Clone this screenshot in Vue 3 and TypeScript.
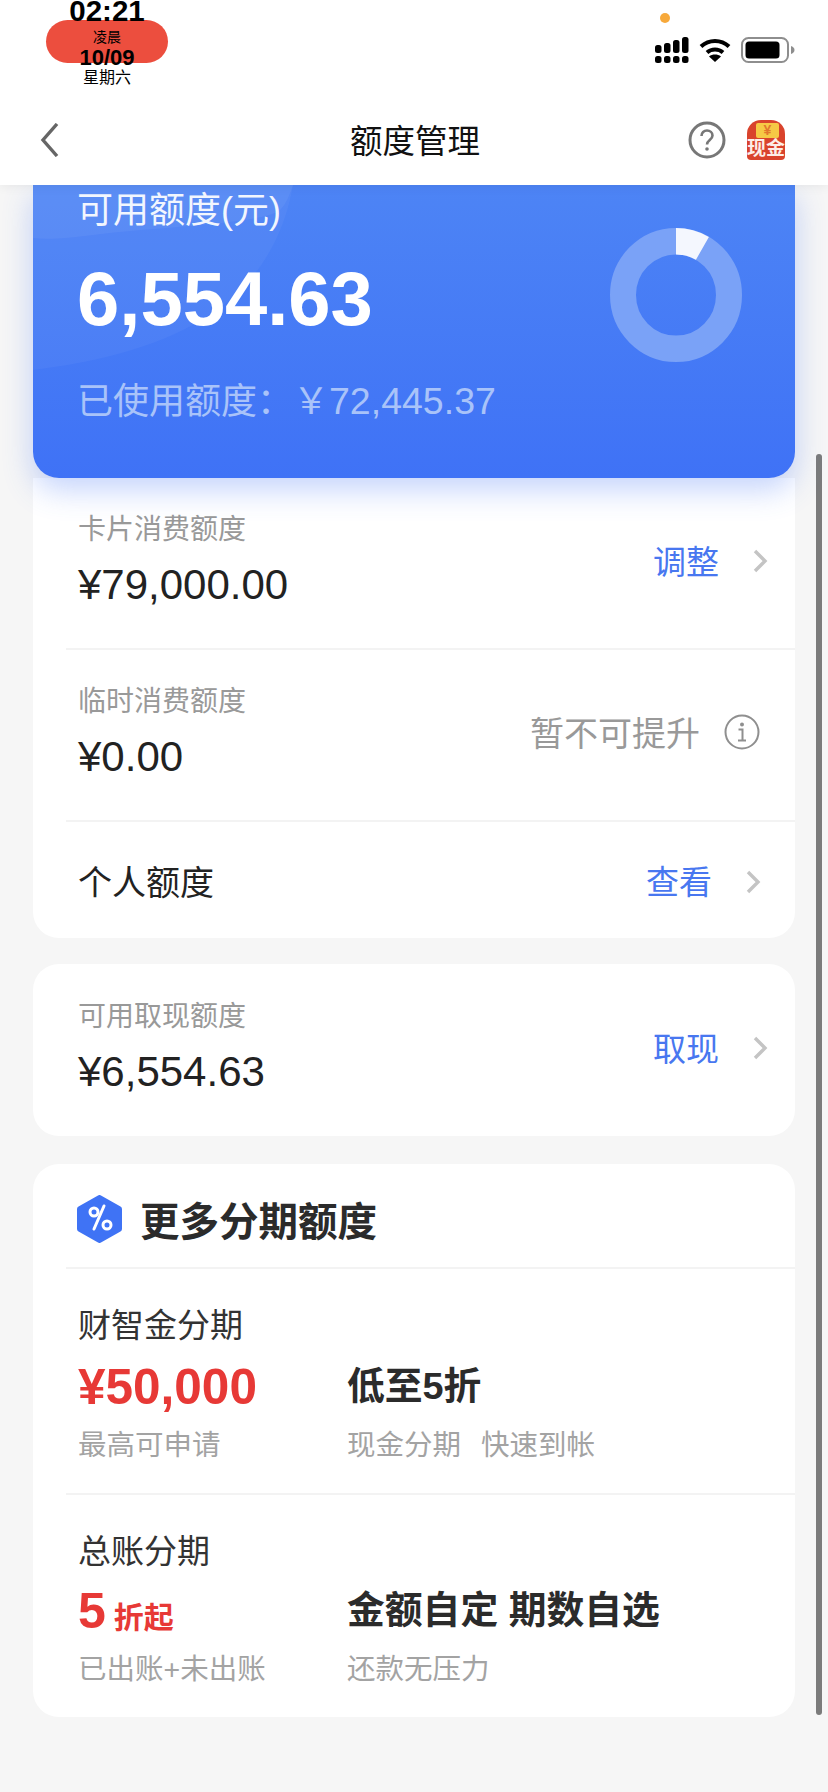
<script setup lang="ts">
import { computed } from 'vue';

interface Row {
  label: string;
  value: string;
  action: string;
}

const used = 72445.37;
const total = 79000;
const radius = 53;
const circumference = 2 * Math.PI * radius;

// 可用额度占比，决定圆环上亮色的一段
const dash = computed(() => {
  const part = ((total - used) / total) * circumference;
  return `${part} ${circumference - part}`;
});

const cashRow: Row = { label: '可用取现额度', value: '¥6,554.63', action: '取现' };
</script>

<template>
  <div class="page">
    <div class="top">
      <div class="status">
        <div class="clock">
          <span class="clock-pill"></span>
          <span class="clock-time">02:21</span>
          <span class="clock-period">凌晨</span>
          <span class="clock-date">10/09</span>
          <span class="clock-week">星期六</span>
        </div>
        <div class="status-right">
          <span class="dot"></span>
          <div class="status-icons">
            <svg width="34" height="26" viewBox="0 0 34 26" fill="#000">
              <rect x="0" y="8" width="6.5" height="8" rx="2.5" />
              <rect x="9" y="6" width="6.5" height="10" rx="2.5" />
              <rect x="18" y="3" width="6.5" height="13" rx="2.5" />
              <rect x="27" y="0" width="6.5" height="16" rx="2.5" />
              <rect x="0" y="19" width="6.5" height="7" rx="2.5" />
              <rect x="9" y="19" width="6.5" height="7" rx="2.5" />
              <rect x="18" y="19" width="6.5" height="7" rx="2.5" />
              <rect x="27" y="19" width="6.5" height="7" rx="2.5" />
            </svg>
            <svg width="32" height="24" viewBox="0 0 32 24" fill="none" stroke="#000" stroke-width="4">
              <path d="M2 8.500C10 1 22 1 30 8.500" />
              <path d="M8 14.500C12.500 10.500 19.500 10.500 24 14.500" />
              <path d="M16 24l-6-5.500c3.500-2.600 8.500-2.600 12 0z" fill="#000" stroke="none" />
            </svg>
            <svg width="54" height="26" viewBox="0 0 54 26">
              <rect x="1" y="1" width="46" height="24" rx="6.500" fill="none" stroke="#8e8e8e" stroke-width="2" />
              <rect x="4.500" y="4.500" width="34" height="17" rx="3.500" fill="#000" />
              <path d="M50 9c2.500 .8 3.500 2.300 3.500 4s-1 3.200-3.500 4z" fill="#8e8e8e" />
            </svg>
          </div>
        </div>
      </div>
      <div class="nav">
        <svg class="back" width="22" height="34" viewBox="0 0 22 34" fill="none" stroke="#666" stroke-width="3.400">
          <path d="M19 1L5 17l14 16" />
        </svg>
        <div class="nav-title">额度管理</div>
        <svg class="help" width="38" height="38" viewBox="0 0 38 38" fill="none" stroke="#777" stroke-width="3">
          <circle cx="19" cy="19" r="17" />
          <path d="M13.500 15c0-3.500 2.500-5.500 5.500-5.500s5.500 2 5.500 5c0 4.500-5.500 4.500-5.500 9" stroke-width="2.600" />
          <circle cx="19" cy="28" r="1.800" fill="#777" stroke="none" />
        </svg>
        <div class="cash-badge">
          <span class="cash-coin">¥</span>
          <span class="cash-text">现金</span>
        </div>
      </div>
    </div>

    <div class="content">
      <div class="hero">
        <svg class="hero-arc" width="270" height="200" viewBox="0 0 270 200">
          <path d="M0 0H260C250 60 215 115 150 145C100 170 40 180 0 185Z" fill="#fff" opacity="0.04" />
          <path d="M0 0H260C255 15 250 25 242 28C210 40 125 42 60 50C35 53 15 55 0 53Z" fill="#fff" opacity="0.05" />
        </svg>
        <div class="hero-text">
          <div class="hero-label">可用额度(元)</div>
          <div class="hero-amount">6,554.63</div>
          <div class="hero-used">已使用额度：￥<span class="hero-used-num">72,445.37</span></div>
        </div>
        <svg class="donut" width="132" height="134" viewBox="0 0 132 132" preserveAspectRatio="none" fill="none">
          <circle cx="66" cy="66" :r="radius" stroke="#7aa2f7" stroke-width="26" />
          <circle
            cx="66"
            cy="66"
            :r="radius"
            stroke="#f4f7fe"
            stroke-width="26"
            :stroke-dasharray="dash"
            transform="rotate(-90 66 66)"
          />
        </svg>
      </div>

      <div class="card card-limits">
        <div class="row row-line">
          <div class="row-text">
            <div class="row-label">卡片消费额度</div>
            <div class="row-value">¥79,000.00</div>
          </div>
          <div class="row-action">
            <span class="link">调整</span>
            <svg class="chev" width="16" height="26" viewBox="0 0 16 26" fill="none" stroke="#c4c4c4" stroke-width="3.400">
              <path d="M3 3l10 10-10 10" />
            </svg>
          </div>
        </div>
        <div class="row row-line">
          <div class="row-text">
            <div class="row-label">临时消费额度</div>
            <div class="row-value">¥0.00</div>
          </div>
          <div class="row-action row-action-muted">
            <span class="muted">暂不可提升</span>
            <svg width="36" height="36" viewBox="0 0 36 36" fill="none" stroke="#8f8f8f" stroke-width="2">
              <circle cx="18" cy="18" r="16.500" />
              <circle cx="18" cy="10.500" r="2" fill="#8f8f8f" stroke="none" />
              <path d="M14.500 15.500H18.500V26M14 26.500H22" />
            </svg>
          </div>
        </div>
        <div class="row row-short">
          <div class="row-plain">个人额度</div>
          <div class="row-action row-action-short">
            <span class="link">查看</span>
            <svg class="chev" width="16" height="26" viewBox="0 0 16 26" fill="none" stroke="#c4c4c4" stroke-width="3.400">
              <path d="M3 3l10 10-10 10" />
            </svg>
          </div>
        </div>
      </div>

      <div class="card card-cash">
        <div class="row">
          <div class="row-text">
            <div class="row-label">{{ cashRow.label }}</div>
            <div class="row-value">{{ cashRow.value }}</div>
          </div>
          <div class="row-action">
            <span class="link">{{ cashRow.action }}</span>
            <svg class="chev" width="16" height="26" viewBox="0 0 16 26" fill="none" stroke="#c4c4c4" stroke-width="3.400">
              <path d="M3 3l10 10-10 10" />
            </svg>
          </div>
        </div>
      </div>

      <div class="card card-more">
        <div class="more-head">
          <svg width="45" height="48" viewBox="0 0 45 48">
            <polygon points="22.500,3 42,14 42,34 22.500,45 3,34 3,14" fill="#3f73f5" stroke="#3f73f5" stroke-width="6" stroke-linejoin="round" />
            <g fill="none" stroke="#fff" stroke-width="3" stroke-linecap="round">
              <circle cx="17" cy="17" r="4" />
              <circle cx="30" cy="30" r="4" />
              <path d="M27 11L17 34" />
            </g>
          </svg>
          <span class="more-title">更多分期额度</span>
        </div>
        <div class="plan plan-first">
          <div class="plan-name">财智金分期</div>
          <div class="plan-grid">
            <div class="plan-red plan-red-money">¥50,000</div>
            <div class="plan-strong">低至5折</div>
            <div class="plan-sub">最高可申请</div>
            <div class="plan-sub plan-tags"><span>现金分期</span><span>快速到帐</span></div>
          </div>
        </div>
        <div class="plan plan-second">
          <div class="plan-name">总账分期</div>
          <div class="plan-grid">
            <div class="plan-red">5<span class="plan-red-unit">折起</span></div>
            <div class="plan-strong">金额自定 期数自选</div>
            <div class="plan-sub">已出账+未出账</div>
            <div class="plan-sub">还款无压力</div>
          </div>
        </div>
      </div>
    </div>

    <div class="scrollbar"></div>
  </div>
</template>

<style scoped>
.page,
.page * {
  box-sizing: border-box;
}

.page {
  position: relative;
  width: 828px;
  height: 1792px;
  overflow: hidden;
  background: #f6f6f6;
  font-family: "Liberation Sans", "Noto Sans CJK SC", sans-serif;
  color: #222;
}

.top {
  position: relative;
  z-index: 2;
  height: 185px;
  background: #fff;
  box-shadow: 0 2px 10px rgba(0, 0, 0, 0.06);
}

.status {
  display: flex;
  justify-content: space-between;
  height: 100px;
  padding: 0 33px 0 46px;
}

.clock {
  position: relative;
  display: flex;
  flex-direction: column;
  align-items: center;
  width: 122px;
  color: #000;
}

.clock-pill {
  position: absolute;
  top: 20px;
  left: 0;
  width: 122px;
  height: 43px;
  border-radius: 22px;
  background: #ec4e3e;
}

.clock-time,
.clock-period,
.clock-date,
.clock-week {
  position: relative;
  white-space: nowrap;
}

.clock-time {
  font-size: 29.500px;
  line-height: 22px;
  font-weight: 700;
}

.clock-period {
  margin-top: 7px;
  font-size: 14px;
  line-height: 16px;
}

.clock-date {
  margin-top: 3px;
  font-size: 22px;
  line-height: 20px;
  font-weight: 700;
}

.clock-week {
  margin-top: 1px;
  font-size: 16px;
  line-height: 18px;
}

.status-right {
  position: relative;
  padding-top: 37px;
}

.dot {
  position: absolute;
  top: 13px;
  left: 5px;
  width: 10px;
  height: 10px;
  border-radius: 50%;
  background: #f7a93b;
}

.status-icons {
  display: flex;
  align-items: center;
  gap: 10px;
}

.nav {
  display: flex;
  align-items: center;
  height: 85px;
  padding: 0 43px 5px 38px;
}

.back {
  flex: none;
}

.nav-title {
  flex: 1;
  margin-bottom: 4px;
  padding-left: 82px;
  text-align: center;
  font-size: 32.500px;
  color: #111;
}

.help {
  flex: none;
  margin-right: 21px;
}

.cash-badge {
  position: relative;
  flex: none;
  width: 38px;
  height: 40px;
  border-radius: 14px 14px 4px 4px;
  background: #d9432c;
  overflow: hidden;
}

.cash-coin {
  position: absolute;
  top: 3px;
  left: 9px;
  width: 23px;
  height: 15px;
  border-radius: 2px;
  background: #f6c945;
  color: #e2772d;
  font-size: 14px;
  line-height: 15px;
  font-weight: 700;
  text-align: center;
}

.cash-text {
  position: absolute;
  left: -1px;
  right: -1px;
  bottom: 1px;
  color: #fdeee8;
  font-size: 19px;
  line-height: 21px;
  font-weight: 700;
  text-align: center;
  white-space: nowrap;
}

.content {
  padding: 0 33px;
}

.hero {
  position: relative;
  z-index: 1;
  display: flex;
  justify-content: space-between;
  height: 293px;
  padding: 0 53px 0 44px;
  border-radius: 0 0 26px 26px;
  background: linear-gradient(180deg, #4d84f5 0%, #3f72f6 100%);
  box-shadow: 0 12px 30px rgba(63, 114, 246, 0.3);
  color: #fff;
}

.hero-arc {
  position: absolute;
  top: 0;
  left: 0;
}

.hero-text {
  position: relative;
}

.hero-label {
  margin-top: 4px;
  font-size: 36px;
  line-height: 44px;
  opacity: 0.92;
}

.hero-amount {
  margin-top: 21px;
  font-size: 76px;
  line-height: 90px;
  font-weight: 700;
}

.hero-used {
  margin-top: 35px;
  font-size: 36px;
  line-height: 44px;
  color: #a9c3f9;
}

.hero-used-num {
  font-size: 37.500px;
}

.donut {
  position: relative;
  flex: none;
  margin-top: 43px;
}

.card {
  margin-top: 28px;
  border-radius: 26px;
  background: #fff;
}

.card-limits {
  margin-top: 0;
  padding-left: 33px;
  border-radius: 0 0 26px 26px;
}

.card-cash {
  margin-top: 26px;
  padding-left: 33px;
}

.row {
  display: flex;
  align-items: center;
  justify-content: space-between;
  height: 172px;
  padding: 0 27px 7px 12px;
}

.row-line {
  border-bottom: 2px solid #f3f3f3;
}

.row-short {
  height: 116px;
  padding-bottom: 0;
}

.row-text {
  margin-top: 4px;
}

.row-label {
  font-size: 28px;
  line-height: 34px;
  color: #999;
}

.row-value {
  margin-top: 13px;
  font-size: 42px;
  line-height: 50px;
  color: #222;
}

.row-plain {
  font-size: 34px;
  color: #222;
}

.row-action {
  display: flex;
  align-items: center;
  gap: 33px;
}

.row-action-muted {
  gap: 24px;
  margin-right: 8px;
}

.row-action-short {
  margin-right: 7px;
}

.chev {
  margin-top: 3px;
}

.link {
  font-size: 33px;
  color: #4877f0;
}

.muted {
  font-size: 34px;
  color: #999;
}

.card-more {
  height: 553px;
  padding-left: 33px;
}

.more-head {
  display: flex;
  align-items: center;
  gap: 18px;
  height: 105px;
  padding: 6px 0 0 11px;
  border-bottom: 2px solid #f3f3f3;
}

.more-title {
  font-size: 39.500px;
  font-weight: 700;
  color: #2b2b2b;
}

.plan {
  padding: 33px 0 0 12px;
}

.plan-first {
  height: 226px;
  padding-top: 35px;
  border-bottom: 2px solid #f3f3f3;
}

.plan-second {
  padding-top: 35px;
}

.plan-second .plan-grid {
  margin-top: 6px;
}

.plan-name {
  font-size: 33px;
  line-height: 44px;
  color: #333;
}

.plan-grid {
  display: grid;
  grid-template-columns: 269px auto;
  align-items: center;
  margin-top: 8px;
}

.plan-red {
  font-size: 50px;
  line-height: 62px;
  font-weight: 700;
  color: #e73936;
}

.plan-red-money {
  font-size: 49.500px;
}

.plan-red-unit {
  margin-left: 8px;
  font-size: 30px;
  line-height: 1;
}

.plan-strong {
  margin-bottom: 2px;
  font-size: 37.800px;
  line-height: 46px;
  font-weight: 700;
  color: #2b2b2b;
}

.plan-sub {
  margin-top: 7px;
  font-size: 28.500px;
  line-height: 40px;
  color: #a3a3a3;
}

.plan-tags {
  display: flex;
  gap: 20px;
}

.scrollbar {
  position: absolute;
  top: 454px;
  left: 816px;
  width: 6px;
  height: 1261px;
  border-radius: 3px;
  background: #7b7b7b;
}
</style>

<style>
html,
body {
  margin: 0;
  background: #f6f6f6;
}
</style>
